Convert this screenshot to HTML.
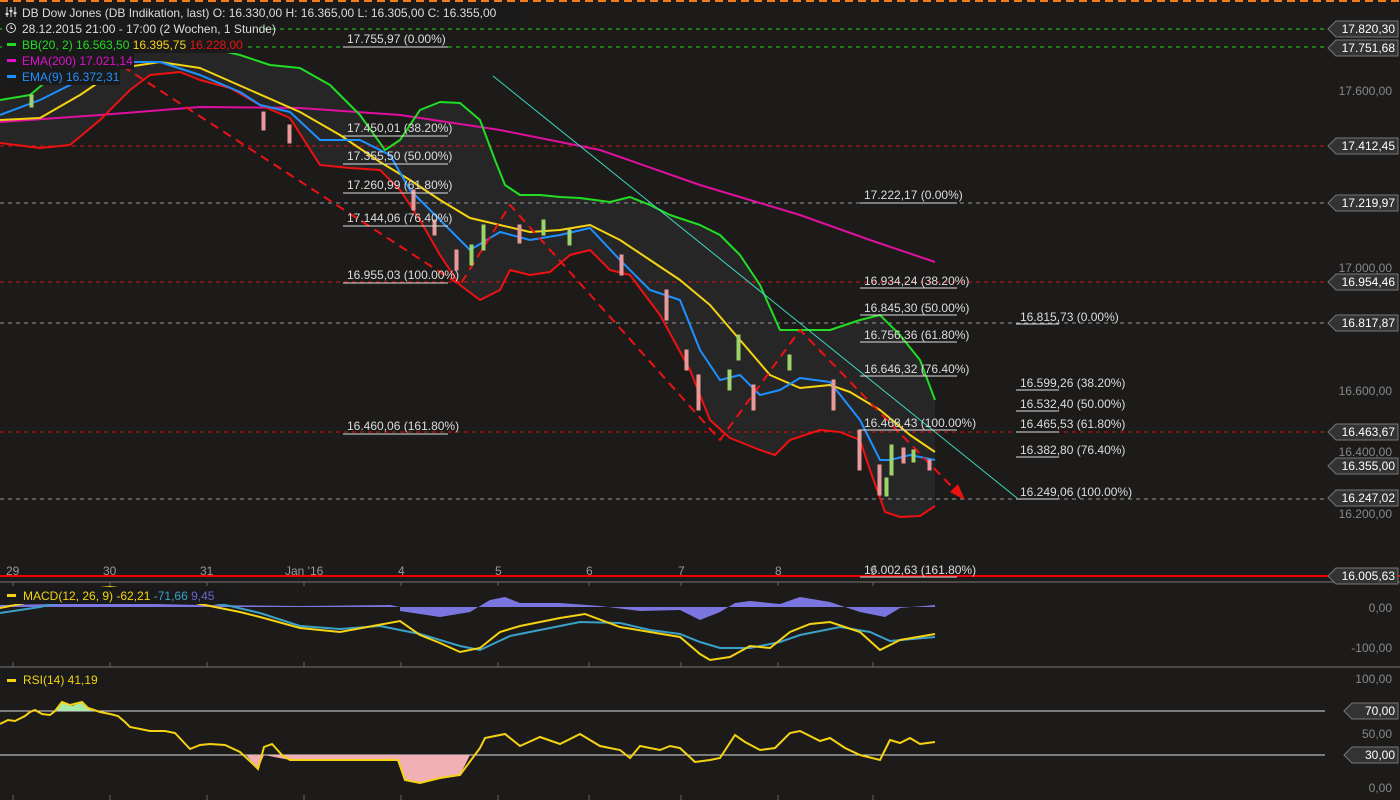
<!DOCTYPE html>
<html><head><meta charset="utf-8"><style>
html,body{margin:0;padding:0;background:#1c1b1a;}
body{width:1400px;height:800px;overflow:hidden;position:relative;font-family:"Liberation Sans",sans-serif;}
svg{position:absolute;left:0;top:0}
text{font-family:"Liberation Sans",sans-serif;font-size:12px}
</style></head><body>
<svg width="1400" height="800" viewBox="0 0 1400 800">
<rect width="1400" height="800" fill="#1c1b1a"/>
<line x1="0" y1="1" x2="1400" y2="1" stroke="#f07d1a" stroke-width="2" stroke-dasharray="8,5"/>
<polygon fill="#262627" points="0,100 30,95 60,70 90,50 120,42 150,45 180,45 210,48 240,55 270,65 300,68 330,85 360,115 385,150 400,140 420,110 440,102 460,103 480,120 495,160 505,185 520,195 540,195 560,197 580,198 610,202 630,197 650,205 670,215 700,225 720,235 740,255 760,285 780,330 800,330 830,330 860,320 880,315 900,335 920,360 935,400 935,506 920,516 900,517 885,512 870,470 860,440 840,432 820,430 790,440 775,455 760,450 730,438 710,420 690,370 660,315 630,275 610,270 590,250 570,255 550,272 530,275 510,270 500,290 480,300 460,285 440,255 420,220 400,190 380,170 350,168 320,165 290,118 260,105 230,88 200,80 180,72 150,75 130,90 100,120 70,145 40,148 0,143"/>
<g stroke-width="1" stroke-dasharray="4,4" fill="none">
<line x1="0" y1="29" x2="1325" y2="29" stroke="#22dd22"/>
<line x1="0" y1="47" x2="1325" y2="47" stroke="#22dd22"/>
<line x1="0" y1="146" x2="1325" y2="146" stroke="#dd1111"/>
<line x1="0" y1="203" x2="1325" y2="203" stroke="#999"/>
<line x1="0" y1="282" x2="1325" y2="282" stroke="#dd1111"/>
<line x1="0" y1="323" x2="1325" y2="323" stroke="#999"/>
<line x1="0" y1="432" x2="1325" y2="432" stroke="#dd1111"/>
<line x1="0" y1="499" x2="1325" y2="499" stroke="#999"/>
</g>
<line x1="0" y1="576" x2="1400" y2="576" stroke="#ee0000" stroke-width="2"/>
<line x1="0" y1="582" x2="1400" y2="582" stroke="#777"/>
<line x1="0" y1="667" x2="1400" y2="667" stroke="#777"/>
<g fill="none" stroke-width="2" stroke-linejoin="round">
<polyline stroke="#e0109e" points="0,122 100,115 200,107 300,108 400,115 500,130 600,150 700,185 800,215 870,240 935,262"/>
<polyline stroke="#22dd22" points="0,100 30,95 60,70 90,50 120,42 150,45 180,45 210,48 240,55 270,65 300,68 330,85 360,115 385,150 400,140 420,110 440,102 460,103 480,120 495,160 505,185 520,195 540,195 560,197 580,198 610,202 630,197 650,205 670,215 700,225 720,235 740,255 760,285 780,330 800,330 830,330 860,320 880,315 900,335 920,360 935,400"/>
<polyline stroke="#ee1111" points="0,143 40,148 70,145 100,120 130,90 150,75 180,72 200,80 230,88 260,105 290,118 320,165 350,168 380,170 400,190 420,220 440,255 460,285 480,300 500,290 510,270 530,275 550,272 570,255 590,250 610,270 630,275 660,315 690,370 710,420 730,438 760,450 775,455 790,440 820,430 840,432 860,440 870,470 885,512 900,517 920,516 935,506"/>
<polyline stroke="#f5d312" points="0,120 40,118 80,95 120,68 160,62 200,68 250,90 300,112 340,135 380,162 410,180 440,200 470,218 500,225 530,232 560,230 590,225 620,240 650,260 680,280 710,305 740,340 770,375 800,388 830,385 850,392 880,410 910,435 935,452"/>
<polyline stroke="#1e90ff" points="0,115 40,100 80,80 120,62 160,62 200,75 240,92 260,105 290,112 320,140 360,140 390,155 410,190 440,220 470,250 500,232 530,240 560,235 590,228 620,260 650,290 680,300 700,350 720,380 740,375 760,395 780,390 800,378 830,382 860,420 880,460 890,460 910,455 935,460"/>
<polyline stroke="#ee1111" stroke-dasharray="9,6" points="110,58 460,285 510,205 720,440 800,330 955,490"/>
</g>
<polygon points="965,500 950,492 958,484" fill="#ee1111"/>
<line x1="493" y1="76" x2="1017" y2="498" stroke="#3fd6c0" stroke-width="1"/>
<g stroke-width="1">
<g fill="#e89a9a" stroke="#e89a9a">
<rect x="262" y="112" width="3" height="18"/><rect x="288" y="125" width="3" height="18"/><rect x="412" y="190" width="3" height="20"/><rect x="433" y="220" width="3" height="15"/><rect x="455" y="250" width="3" height="20"/><rect x="518" y="225" width="3" height="18"/><rect x="620" y="255" width="3" height="20"/><rect x="665" y="290" width="3" height="30"/><rect x="685" y="350" width="3" height="20"/><rect x="697" y="375" width="3" height="35"/><rect x="752" y="385" width="3" height="25"/><rect x="832" y="380" width="3" height="30"/><rect x="858" y="430" width="3" height="40"/><rect x="878" y="465" width="3" height="30"/><rect x="902" y="448" width="3" height="15"/><rect x="928" y="460" width="3" height="10"/>
</g>
<g fill="#9ed36a" stroke="#9ed36a">
<rect x="30" y="95" width="3" height="12"/><rect x="470" y="245" width="3" height="20"/><rect x="482" y="225" width="3" height="25"/><rect x="542" y="220" width="3" height="15"/><rect x="568" y="230" width="3" height="15"/><rect x="728" y="370" width="3" height="20"/><rect x="737" y="335" width="3" height="25"/><rect x="788" y="355" width="3" height="15"/><rect x="890" y="445" width="3" height="30"/><rect x="885" y="478" width="3" height="18"/><rect x="912" y="450" width="3" height="12"/>
</g>
</g>
<g fill="#dddddd" font-size="12">
<text x="347" y="43">17.755,97 (0.00%)</text>
<text x="347" y="132">17.450,01 (38.20%)</text>
<text x="347" y="160">17.355,50 (50.00%)</text>
<text x="347" y="189">17.260,99 (61.80%)</text>
<text x="347" y="222">17.144,06 (76.40%)</text>
<text x="347" y="279">16.955,03 (100.00%)</text>
<text x="347" y="430">16.460,06 (161.80%)</text>
<text x="864" y="199">17.222,17 (0.00%)</text>
<text x="864" y="285">16.934,24 (38.20%)</text>
<text x="864" y="312">16.845,30 (50.00%)</text>
<text x="864" y="339">16.756,36 (61.80%)</text>
<text x="864" y="373">16.646,32 (76.40%)</text>
<text x="864" y="427">16.468,43 (100.00%)</text>
<text x="864" y="574">16.002,63 (161.80%)</text>
<text x="1020" y="321">16.815,73 (0.00%)</text>
<text x="1020" y="387">16.599,26 (38.20%)</text>
<text x="1020" y="408">16.532,40 (50.00%)</text>
<text x="1020" y="428">16.465,53 (61.80%)</text>
<text x="1020" y="454">16.382,80 (76.40%)</text>
<text x="1020" y="496">16.249,06 (100.00%)</text>
</g>
<g stroke="#dddddd" stroke-width="1">
<line x1="343" y1="47" x2="448" y2="47"/><line x1="343" y1="136" x2="448" y2="136"/><line x1="343" y1="164" x2="448" y2="164"/><line x1="343" y1="193" x2="448" y2="193"/><line x1="343" y1="226" x2="448" y2="226"/><line x1="343" y1="283" x2="448" y2="283"/><line x1="343" y1="434" x2="448" y2="434"/>
<line x1="860" y1="203" x2="957" y2="203"/><line x1="860" y1="288" x2="957" y2="288"/><line x1="860" y1="315" x2="957" y2="315"/><line x1="860" y1="342" x2="957" y2="342"/><line x1="860" y1="376" x2="957" y2="376"/><line x1="860" y1="430" x2="957" y2="430"/><line x1="860" y1="577" x2="957" y2="577"/>
<line x1="1016" y1="324" x2="1059" y2="324"/><line x1="1016" y1="390" x2="1059" y2="390"/><line x1="1016" y1="411" x2="1059" y2="411"/><line x1="1016" y1="432" x2="1059" y2="432"/><line x1="1016" y1="457" x2="1059" y2="457"/><line x1="1016" y1="499" x2="1059" y2="499"/>
</g>
<rect x="2" y="3" width="520" height="18" fill="#1a1a1a"/>
<rect x="2" y="21" width="262" height="16" fill="#1a1a1a"/>
<rect x="2" y="37" width="244" height="16" fill="#1a1a1a"/>
<rect x="2" y="53" width="132" height="16" fill="#1a1a1a"/>
<rect x="2" y="69" width="118" height="16" fill="#1a1a1a"/>
<g font-size="12.5">
<text x="22" y="17" fill="#dddddd" font-size="12.5">DB Dow Jones (DB Indikation, last)  O: 16.330,00  H: 16.365,00  L: 16.305,00  C: 16.355,00</text>
<path d="M7 7v10M11 7v10M15 7v10" stroke="#ddd" stroke-width="1"/><rect x="5.5" y="13" width="3" height="2" fill="#ddd"/><rect x="9.5" y="10" width="3" height="2" fill="#ddd"/><rect x="13.5" y="12" width="3" height="2" fill="#ddd"/>
<circle cx="11" cy="28" r="4.5" fill="none" stroke="#ddd"/><path d="M11 25.5v3h2" stroke="#ddd" fill="none"/>
<text x="22" y="33" fill="#dddddd" font-size="12.5">28.12.2015 21:00 - 17:00 (2 Wochen, 1 Stunde)</text>
<rect x="7" y="43" width="9" height="3" fill="#22dd22"/>
<text x="22" y="49" font-size="12.5"><tspan fill="#22dd22">BB(20, 2)  16.563,50 </tspan><tspan fill="#f5d312"> 16.395,75 </tspan><tspan fill="#ee1111"> 16.228,00</tspan></text>
<rect x="7" y="59" width="9" height="3" fill="#e010cc"/>
<text x="22" y="65" fill="#e010cc" font-size="12.5">EMA(200)  17.021,14</text>
<rect x="7" y="75" width="9" height="3" fill="#1e90ff"/>
<text x="22" y="81" fill="#1e90ff" font-size="12.5">EMA(9)  16.372,31</text>
</g>
<g fill="#999" font-size="12">
<text x="6" y="575">29</text><text x="103" y="575">30</text><text x="200" y="575">31</text><text x="285" y="575">Jan '16</text><text x="398" y="575">4</text><text x="495" y="575">5</text><text x="586" y="575">6</text><text x="678" y="575">7</text><text x="775" y="575">8</text><text x="870" y="575">9</text>
</g>
<g stroke="#666"><line x1="13" y1="582" x2="13" y2="586"/><line x1="110" y1="582" x2="110" y2="586"/><line x1="207" y1="582" x2="207" y2="586"/><line x1="304" y1="582" x2="304" y2="586"/><line x1="401" y1="582" x2="401" y2="586"/><line x1="498" y1="582" x2="498" y2="586"/><line x1="589" y1="582" x2="589" y2="586"/><line x1="681" y1="582" x2="681" y2="586"/><line x1="778" y1="582" x2="778" y2="586"/><line x1="873" y1="582" x2="873" y2="586"/>
<line x1="13" y1="662" x2="13" y2="667"/><line x1="110" y1="662" x2="110" y2="667"/><line x1="207" y1="662" x2="207" y2="667"/><line x1="304" y1="662" x2="304" y2="667"/><line x1="401" y1="662" x2="401" y2="667"/><line x1="498" y1="662" x2="498" y2="667"/><line x1="589" y1="662" x2="589" y2="667"/><line x1="681" y1="662" x2="681" y2="667"/><line x1="778" y1="662" x2="778" y2="667"/><line x1="873" y1="662" x2="873" y2="667"/>
<line x1="13" y1="795" x2="13" y2="800"/><line x1="110" y1="795" x2="110" y2="800"/><line x1="207" y1="795" x2="207" y2="800"/><line x1="304" y1="795" x2="304" y2="800"/><line x1="401" y1="795" x2="401" y2="800"/><line x1="498" y1="795" x2="498" y2="800"/><line x1="589" y1="795" x2="589" y2="800"/><line x1="681" y1="795" x2="681" y2="800"/><line x1="778" y1="795" x2="778" y2="800"/><line x1="873" y1="795" x2="873" y2="800"/>
</g>
<g fill="#7b75e0">
<path d="M0,605 L110,603 L200,605 L300,606 L390,605 L400,607 L400,611 L440,617 L470,612 L490,600 L505,597 L520,603 L560,603 L600,606 L640,611 L680,610 L700,620 L720,612 L735,603 L750,601 L780,604 L800,597 L830,602 L860,612 L885,617 L900,608 L935,605 L935,607 L0,607 Z"/>
</g>
<g fill="none" stroke-width="2">
<polyline stroke="#3aa0c8" points="0,613 40,607 90,595 130,590 180,597 230,606 260,613 300,626 340,629 380,626 420,634 460,646 480,650 510,636 540,630 580,622 620,623 650,630 680,634 700,642 720,648 750,648 780,642 800,635 840,627 870,632 890,641 935,637"/>
<polyline stroke="#f5d312" points="0,608 40,600 80,590 110,587 150,592 200,604 240,612 260,617 300,628 340,632 400,621 420,635 440,643 460,652 480,648 500,632 520,626 560,618 585,614 620,627 650,632 680,637 700,654 710,660 730,657 750,646 770,648 790,632 810,624 830,622 860,632 880,650 900,640 935,634"/>
</g>
<rect x="2" y="587" width="228" height="17" fill="#1a1a1a"/>
<rect x="7" y="594" width="9" height="3" fill="#f5d312"/>
<text x="23" y="600" font-size="12"><tspan fill="#f5d312">MACD(12, 26, 9)  -62,21 </tspan><tspan fill="#3aa0c8"> -71,66 </tspan><tspan fill="#6a64d0"> 9,45</tspan></text>
<line x1="0" y1="711" x2="1325" y2="711" stroke="#dddddd"/>
<line x1="0" y1="755" x2="1325" y2="755" stroke="#dddddd"/>
<polygon fill="#a8e8a8" points="55,711 62,702 72,706 82,702 92,711"/>
<polygon fill="#f0b0b4" points="246,755 258,769 264,755 290,760 398,760 405,780 420,783 440,778 460,775 470,755"/>
<polyline fill="none" stroke="#f5d312" stroke-width="2" points="0,724 8,720 15,721 25,716 30,712 35,710 42,714 50,715 55,711 62,702 70,705 82,702 88,708 100,712 110,714 118,716 125,722 130,727 150,731 165,731 175,733 190,749 200,745 210,744 225,745 240,752 252,763 258,769 264,747 272,744 282,755 290,760 398,760 405,780 420,783 440,778 460,775 480,748 485,738 505,734 520,746 540,737 560,744 580,734 600,746 620,750 630,758 640,746 660,750 670,746 680,748 695,762 710,760 720,758 735,735 745,742 760,750 775,748 790,733 800,731 810,736 820,741 830,738 845,748 860,755 880,760 890,740 900,743 910,738 920,744 935,742"/>
<rect x="2" y="671" width="104" height="17" fill="#1a1a1a"/>
<rect x="7" y="679" width="9" height="3" fill="#f5d312"/>
<text x="23" y="684" font-size="12" fill="#f5d312">RSI(14)  41,19</text>
<g fill="#888" font-size="12" text-anchor="end">
<text x="1392" y="95">17.600,00</text>
<text x="1392" y="272">17.000,00</text>
<text x="1392" y="395">16.600,00</text>
<text x="1392" y="456">16.400,00</text>
<text x="1392" y="518">16.200,00</text>
<text x="1392" y="612">0,00</text>
<text x="1392" y="652">-100,00</text>
<text x="1392" y="683">100,00</text>
<text x="1392" y="738">50,00</text>
<text x="1392" y="792">0,00</text>
</g>
<g font-size="12.5" fill="#fff" text-anchor="end">
<g><path d="M1336,21 L1398,21 L1398,37 L1336,37 L1328,29 Z" fill="#333" stroke="#777"/><text x="1395" y="33">17.820,30</text></g>
<g><path d="M1336,40 L1398,40 L1398,56 L1336,56 L1328,48 Z" fill="#333" stroke="#777"/><text x="1395" y="52">17.751,68</text></g>
<g><path d="M1336,138 L1398,138 L1398,154 L1336,154 L1328,146 Z" fill="#333" stroke="#777"/><text x="1395" y="150">17.412,45</text></g>
<g><path d="M1336,195 L1398,195 L1398,211 L1336,211 L1328,203 Z" fill="#333" stroke="#777"/><text x="1395" y="207">17.219,97</text></g>
<g><path d="M1336,274 L1398,274 L1398,290 L1336,290 L1328,282 Z" fill="#333" stroke="#777"/><text x="1395" y="286">16.954,46</text></g>
<g><path d="M1336,315 L1398,315 L1398,331 L1336,331 L1328,323 Z" fill="#333" stroke="#777"/><text x="1395" y="327">16.817,87</text></g>
<g><path d="M1336,424 L1398,424 L1398,440 L1336,440 L1328,432 Z" fill="#333" stroke="#777"/><text x="1395" y="436">16.463,67</text></g>
<g><path d="M1336,458 L1398,458 L1398,474 L1336,474 L1328,466 Z" fill="#333" stroke="#777"/><text x="1395" y="470">16.355,00</text></g>
<g><path d="M1336,490 L1398,490 L1398,506 L1336,506 L1328,498 Z" fill="#333" stroke="#777"/><text x="1395" y="502">16.247,02</text></g>
<g><path d="M1336,568 L1398,568 L1398,584 L1336,584 L1328,576 Z" fill="#333" stroke="#777"/><text x="1395" y="580">16.005,63</text></g>
<g><path d="M1352,703 L1398,703 L1398,719 L1352,719 L1344,711 Z" fill="#333" stroke="#777"/><text x="1395" y="715">70,00</text></g>
<g><path d="M1352,747 L1398,747 L1398,763 L1352,763 L1344,755 Z" fill="#333" stroke="#777"/><text x="1395" y="759">30,00</text></g>
</g>
</svg>
</body></html>
